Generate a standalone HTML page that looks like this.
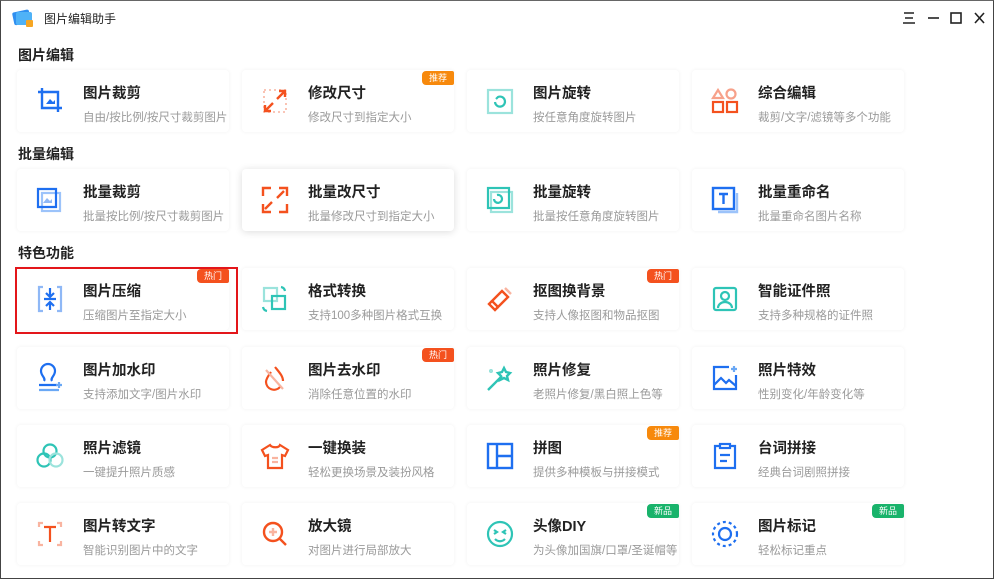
<!DOCTYPE html>
<html><head><meta charset="utf-8"><style>
*{margin:0;padding:0;box-sizing:border-box}
body{width:1000px;height:581px;background:#fff;font-family:"Liberation Sans","Noto Sans CJK SC",sans-serif;position:relative;overflow:hidden}
.win{position:absolute;left:0;top:0;width:994px;height:579px;border:1px solid #444;border-top-color:#666}
.title{position:absolute;left:44px;top:10px;font-size:12px;color:#222}
.h{position:absolute;left:18px;font-size:14px;font-weight:bold;color:#222}
.card{position:absolute;width:212px;height:62px;background:#fff;border-radius:4px;box-shadow:0 0 4px rgba(0,0,0,.06)}
.card.sh{box-shadow:0 1px 8px rgba(0,0,0,.14)}
.card svg{position:absolute;left:17px;top:15px}
.t{position:absolute;left:66px;top:12px;font-size:14.5px;font-weight:bold;color:#222}
.s{position:absolute;left:66px;top:39px;font-size:11.5px;color:#9a9a9a;white-space:nowrap}
.b{position:absolute;right:0;top:1px;width:32px;height:14px;border-radius:4px 2px 2px 4px;color:#fff;font-size:9px;text-align:center;line-height:14px}
.o{background:#f7890c}.r{background:#f4511e}.g{background:#19b36b}
.sel{position:absolute;left:15px;top:267px;width:223px;height:67px;border:2px solid #e3161a}
</style></head><body>
<div class="win"></div>
<svg style="position:absolute;left:11px;top:7px" width="24" height="22" viewBox="0 0 24 22"><rect x="2" y="4" width="17" height="13" rx="2" fill="#2f8ff0" transform="rotate(-12 10 10)"/><rect x="5" y="5" width="16" height="13" rx="2" fill="#4fb2f7"/><rect x="15" y="13" width="7" height="7" rx="1" fill="#f6a623"/></svg>
<div class="title">图片编辑助手</div>
<svg style="position:absolute;left:900px;top:10px" width="90" height="16" viewBox="0 0 90 16" fill="none" stroke="#222" stroke-width="1.6"><path d="M4 3h10M5 8h8M3 13h12"/><path d="M28 8h11"/><rect x="51" y="3" width="10" height="10"/><path d="M75 3l9 10M84 3l-9 10"/></svg>

<div class="h" style="top:45px">图片编辑</div>
<div class="h" style="top:144px">批量编辑</div>
<div class="h" style="top:243px">特色功能</div>

<!-- row1 -->
<div class="card" style="left:17px;top:70px"><svg width="32" height="32" viewBox="0 0 32 32" fill="none" stroke="#1e6ff0" stroke-width="2.4"><path d="M4 7h20v20M8 3v20h20"/><path d="M12 19l4-5 3 3 2-2v4h-9z" fill="#1e6ff0" stroke="none"/></svg><div class="t">图片裁剪</div><div class="s">自由/按比例/按尺寸裁剪图片</div></div>
<div class="card" style="left:242px;top:70px"><svg width="32" height="32" viewBox="0 0 32 32" fill="none" stroke="#f4511e" stroke-width="2.4"><rect x="5" y="5" width="22" height="22" stroke="#f9b4a0" stroke-dasharray="2 3" stroke-width="1.6"/><path d="M18 14l8-8M20 6h6v6M14 18l-8 8M6 20v6h6"/></svg><div class="t">修改尺寸</div><div class="s">修改尺寸到指定大小</div><div class="b o">推荐</div></div>
<div class="card" style="left:467px;top:70px"><svg width="32" height="32" viewBox="0 0 32 32" fill="none" stroke="#2ec4b6" stroke-width="2.2"><rect x="4" y="5" width="24" height="23" stroke="#9be3dc"/><path d="M11 17a5 5 0 1 0 3-5l-2 2"/></svg><div class="t">图片旋转</div><div class="s">按任意角度旋转图片</div></div>
<div class="card" style="left:692px;top:70px"><svg width="32" height="32" viewBox="0 0 32 32" fill="none" stroke-width="2.2"><path d="M9 5l5 8H4z" stroke="#f7a18a"/><circle cx="22" cy="9" r="4.5" stroke="#f7a18a"/><rect x="4" y="17" width="10" height="10" stroke="#f4511e"/><rect x="18" y="17" width="10" height="10" stroke="#f4511e"/></svg><div class="t">综合编辑</div><div class="s">裁剪/文字/滤镜等多个功能</div></div>
<!-- row2 -->
<div class="card" style="left:17px;top:169px"><svg width="32" height="32" viewBox="0 0 32 32" fill="none" stroke-width="2.2"><rect x="8" y="9" width="18" height="18" stroke="#9cc3fa"/><path d="M4 5h18v18H4z" stroke="#1e6ff0"/><path d="M9 19l4-5 3 3 2-2v4z" fill="#8fb8f6" stroke="none"/></svg><div class="t">批量裁剪</div><div class="s">批量按比例/按尺寸裁剪图片</div></div>
<div class="card sh" style="left:242px;top:169px"><svg width="32" height="32" viewBox="0 0 32 32" fill="none" stroke="#f4511e" stroke-width="2.4"><path d="M4 12V4h8M28 12V4h-8M4 20v8h8M20 28h8v-8" stroke="#f4511e"/><path d="M18 14l7-7M13 18l-7 7"/></svg><div class="t">批量改尺寸</div><div class="s">批量修改尺寸到指定大小</div></div>
<div class="card" style="left:467px;top:169px"><svg width="32" height="32" viewBox="0 0 32 32" fill="none" stroke="#2ec4b6" stroke-width="2.2"><rect x="7" y="8" width="21" height="20" stroke="#9be3dc"/><rect x="4" y="4" width="21" height="20"/><path d="M10 15a4 4 0 1 0 3-4"/></svg><div class="t">批量旋转</div><div class="s">批量按任意角度旋转图片</div></div>
<div class="card" style="left:692px;top:169px"><svg width="32" height="32" viewBox="0 0 32 32" fill="none" stroke-width="2.4"><path d="M9 28h19V9" stroke="#9cc3fa"/><rect x="4" y="4" width="21" height="21" stroke="#1e6ff0"/><path d="M10 10h9M14.5 10v10" stroke="#1e6ff0"/></svg><div class="t">批量重命名</div><div class="s">批量重命名图片名称</div></div>
<!-- row3 -->
<div class="card" style="left:17px;top:268px"><svg width="32" height="32" viewBox="0 0 32 32" fill="none" stroke-width="2.2"><path d="M9 4H5v24h4M23 4h4v24h-4" stroke="#8fb8f6"/><path d="M16 5v9M12 10l4 4 4-4M16 27v-8M12 23l4-4 4 4M10 16h12" stroke="#1e6ff0"/></svg><div class="t">图片压缩</div><div class="s">压缩图片至指定大小</div><div class="b r">热门</div></div>
<div class="card" style="left:242px;top:268px"><svg width="32" height="32" viewBox="0 0 32 32" fill="none" stroke-width="2.2"><rect x="5" y="5" width="13" height="13" stroke="#9be3dc"/><rect x="13" y="13" width="13" height="13" stroke="#2ec4b6"/><path d="M22 4a5 5 0 0 1 4 4M4 24a5 5 0 0 0 4 4" stroke="#2ec4b6"/></svg><div class="t">格式转换</div><div class="s">支持100多种图片格式互换</div></div>
<div class="card" style="left:467px;top:268px"><svg width="32" height="32" viewBox="0 0 32 32" fill="none" stroke-width="2.4"><path d="M18 8l6 6-10 10-6-6z" stroke="#f4511e"/><path d="M21 5l6 6" stroke="#f9b4a0"/><path d="M8 18l-3 3 6 6 3-3" stroke="#f4511e"/></svg><div class="t">抠图换背景</div><div class="s">支持人像抠图和物品抠图</div><div class="b r">热门</div></div>
<div class="card" style="left:692px;top:268px"><svg width="32" height="32" viewBox="0 0 32 32" fill="none" stroke="#2ec4b6" stroke-width="2.2"><rect x="5" y="5" width="22" height="22" rx="2"/><circle cx="16" cy="13" r="4"/><path d="M9 25a7 6 0 0 1 14 0"/></svg><div class="t">智能证件照</div><div class="s">支持多种规格的证件照</div></div>
<!-- row4 -->
<div class="card" style="left:17px;top:347px"><svg width="32" height="32" viewBox="0 0 32 32" fill="none" stroke-width="2.2"><path d="M10 19c2-3-3-5-3-10a7 7 0 0 1 14 0c0 5-5 7-3 10M5 23h18" stroke="#1e6ff0"/><path d="M5 28h20M25 20v6M22 23h6" stroke="#6aa8f5"/></svg><div class="t">图片加水印</div><div class="s">支持添加文字/图片水印</div></div>
<div class="card" style="left:242px;top:347px"><svg width="32" height="32" viewBox="0 0 32 32" fill="none" stroke-width="2.2"><path d="M12 10c-3 4-5 7-5 10a8 8 0 0 0 14 5M16 5c4 5 8 9 8 14" stroke="#f4511e"/><path d="M7 8l17 19" stroke="#f9b4a0"/></svg><div class="t">图片去水印</div><div class="s">消除任意位置的水印</div><div class="b r">热门</div></div>
<div class="card" style="left:467px;top:347px"><svg width="32" height="32" viewBox="0 0 32 32" fill="none" stroke-width="2.4"><path d="M4 28l14-14" stroke="#2ec4b6"/><path d="M20 6l2 4 4 1-3 3 1 4-4-2-4 2 1-4-3-3 4-1z" stroke="#2ec4b6"/><path d="M5 9h4M7 7v4" stroke="#9be3dc"/></svg><div class="t">照片修复</div><div class="s">老照片修复/黑白照上色等</div></div>
<div class="card" style="left:692px;top:347px"><svg width="32" height="32" viewBox="0 0 32 32" fill="none" stroke="#1e6ff0" stroke-width="2.2"><path d="M20 5H5v22h22V13"/><path d="M5 23l7-7 5 5 3-3 7 6"/><path d="M25 4v6M22 7h6" stroke="#6aa8f5"/></svg><div class="t">照片特效</div><div class="s">性别变化/年龄变化等</div></div>
<!-- row5 -->
<div class="card" style="left:17px;top:425px"><svg width="32" height="32" viewBox="0 0 32 32" fill="none" stroke="#2ec4b6" stroke-width="2.2"><circle cx="16" cy="11" r="6.5"/><circle cx="10" cy="20" r="6.5"/><circle cx="22" cy="20" r="6.5" stroke="#9be3dc"/></svg><div class="t">照片滤镜</div><div class="s">一键提升照片质感</div></div>
<div class="card" style="left:242px;top:425px"><svg width="32" height="32" viewBox="0 0 32 32" fill="none" stroke="#f4511e" stroke-width="2.2"><path d="M11 5l-8 5 3 6 3-1v13h14V15l3 1 3-6-8-5c-1 3-8 3-10 0z"/><path d="M13 18h6M13 22h6" stroke="#f9b4a0"/></svg><div class="t">一键换装</div><div class="s">轻松更换场景及装扮风格</div></div>
<div class="card" style="left:467px;top:425px"><svg width="32" height="32" viewBox="0 0 32 32" fill="none" stroke="#1e6ff0" stroke-width="2.4"><rect x="4" y="4" width="24" height="24"/><path d="M13 4v24M13 16h15"/></svg><div class="t">拼图</div><div class="s">提供多种模板与拼接模式</div><div class="b o">推荐</div></div>
<div class="card" style="left:692px;top:425px"><svg width="32" height="32" viewBox="0 0 32 32" fill="none" stroke="#1e6ff0" stroke-width="2.2"><path d="M11 6H6v22h20V6h-5"/><rect x="11" y="4" width="10" height="4"/><path d="M11 15h10M11 21h7"/></svg><div class="t">台词拼接</div><div class="s">经典台词剧照拼接</div></div>
<!-- row6 -->
<div class="card" style="left:17px;top:503px"><svg width="32" height="32" viewBox="0 0 32 32" fill="none" stroke-width="2.2"><path d="M9 5H5v4M23 5h4v4M5 23v4h4M27 23v4h-4" stroke="#f9b4a0"/><path d="M10 9h12M16 9v15" stroke="#f4511e"/></svg><div class="t">图片转文字</div><div class="s">智能识别图片中的文字</div></div>
<div class="card" style="left:242px;top:503px"><svg width="32" height="32" viewBox="0 0 32 32" fill="none" stroke="#f4511e" stroke-width="2.4"><circle cx="14" cy="14" r="9"/><path d="M21 21l6 6"/><path d="M10 14h8M14 10v8" stroke="#f9b4a0"/></svg><div class="t">放大镜</div><div class="s">对图片进行局部放大</div></div>
<div class="card" style="left:467px;top:503px"><svg width="32" height="32" viewBox="0 0 32 32" fill="none" stroke="#2ec4b6" stroke-width="2.2"><circle cx="16" cy="16" r="12"/><path d="M10 12l3 2-3 2M22 12l-3 2 3 2M11 21c3 3 7 3 10 0"/></svg><div class="t">头像DIY</div><div class="s">为头像加国旗/口罩/圣诞帽等</div><div class="b g">新品</div></div>
<div class="card" style="left:692px;top:503px"><svg width="32" height="32" viewBox="0 0 32 32" fill="none" stroke="#1e6ff0" stroke-width="2.2"><circle cx="16" cy="16" r="12" stroke-dasharray="3 3"/><circle cx="16" cy="16" r="6"/></svg><div class="t">图片标记</div><div class="s">轻松标记重点</div><div class="b g">新品</div></div>

<div class="sel"></div>
</body></html>
